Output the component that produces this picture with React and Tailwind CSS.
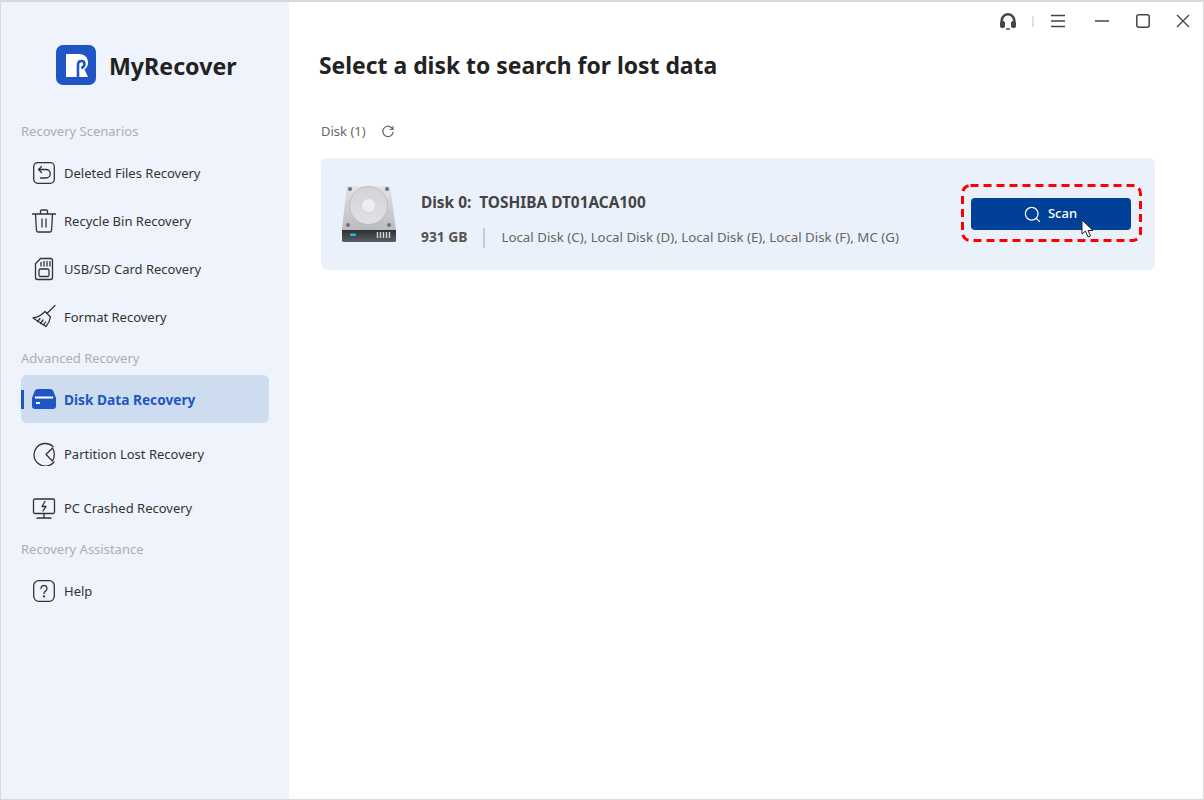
import { Search } from 'lucide-react';

const font = { fontFamily: '"Noto Sans", sans-serif' };

const Logo = () => (
  <svg width="40" height="40" viewBox="0 0 40 40">
    <rect width="40" height="40" rx="7" fill="#1f55c4" />
    <path d="M10 9h13c5.500 0 9 3.500 9 8.500 0 3-1.300 5.500-3.500 7L32 32H10z" fill="#fff" />
    <path d="M22 33V20c0-2.500 1.500-4 3.500-4s3 1.500 3 3c0 2-1.500 3.500-3.500 4.500" fill="none" stroke="#1f55c4" strokeWidth="2.600" />
    <path d="M24 21l3.500 5.500-4 .5z" fill="#fff" />
  </svg>
);

const Ico = ({ children }) => (
  <svg width="24" height="24" viewBox="0 0 24 24" fill="none" stroke="#333" strokeWidth="1.300" strokeLinecap="round" strokeLinejoin="round">
    {children}
  </svg>
);

const icons = {
  deleted: (
    <Ico>
      <rect x="1.700" y="1.700" width="20.600" height="20.600" rx="4" />
      <path d="M9.500 5.500 6.500 8.500l3 3M6.800 8.500h7.200a3.800 3.800 0 0 1 0 8.500H8.500" />
    </Ico>
  ),
  bin: (
    <Ico>
      <path d="M.5 5h23M8.500 5V2.200c0-.7.500-1.200 1.200-1.200h4.600c.7 0 1.200.5 1.200 1.200V5M3.500 5l1 16.500c0 .9.700 1.500 1.500 1.500h12c.8 0 1.500-.6 1.500-1.500l1-16.500M10 10v8M14 10v8" />
    </Ico>
  ),
  sd: (
    <Ico>
      <path d="M8.500 1.500h10c1.200 0 2 .8 2 2v17c0 1.200-.8 2-2 2H5.500c-1.200 0-2-.8-2-2V6.700z" />
      <rect x="7" y="12" width="10" height="7.500" rx="1.500" />
      <path d="M9 5.500v3.500M12 4.500v4.500M15 4.500v4.500M18 4.500v4.500" />
    </Ico>
  ),
  broom: (
    <Ico>
      <path d="M23 .5 15 8.500M13 6.500l5.500 5.500c-.5 3-2 6.500-4.500 9.500L1 13c4.500-.5 8.500-3 12-6.500zM5.500 16.500l2.500-3M8.500 18.500l2.500-3.500M11.500 20l2-3" />
    </Ico>
  ),
  partition: (
    <Ico>
      <path d="M21 4.500a11.300 11.300 0 1 0 1 15.500" />
      <path d="M20.500 6 14 12.500l6.500 6.500c1.200-1.800 1.800-4 1.800-6.500s-.6-4.700-1.800-6.500z" />
    </Ico>
  ),
  pc: (
    <Ico>
      <rect x="1.500" y="3" width="21" height="14.500" rx="1.500" />
      <path d="M13 5.500 10 10.500h4L11 15M12 17.500v4.500M5 22h14" />
    </Ico>
  ),
  help: (
    <Ico>
      <rect x="1.700" y="1.700" width="20.600" height="20.600" rx="5" />
      <path d="M9 9.500a3 3 0 1 1 4.500 2.600c-1 .6-1.500 1.200-1.500 2.400" />
      <circle cx="12" cy="17.500" r=".5" fill="#333" />
    </Ico>
  ),
};

const MenuItem = ({ icon, label, h = 'h-12' }) => (
  <div className={`${h} flex items-center pl-[11px] gap-[8px] text-[13px] text-[#333]`}>
    <span className="w-6 h-6 flex-none">{icons[icon]}</span>
    <span className="pt-0.5">{label}</span>
  </div>
);

const SectionLabel = ({ children, h, className = '' }) => (
  <div className={`${h} ${className} flex items-center text-[13px] text-[#b0adad]`}>{children}</div>
);

const DiskIcon = () => (
  <svg width="56" height="58" viewBox="0 0 56 58">
    <defs>
      <linearGradient id="body" x1="0" y1="0" x2="0" y2="1">
        <stop offset="0" stopColor="#e2e3e5" />
        <stop offset="1" stopColor="#b9bbbe" />
      </linearGradient>
      <linearGradient id="plate" x1="0" y1="0" x2="0" y2="1">
        <stop offset="0" stopColor="#d2d4d7" />
        <stop offset="1" stopColor="#e0e1e3" />
      </linearGradient>
      <linearGradient id="base" x1="0" y1="0" x2="0" y2="1">
        <stop offset="0" stopColor="#2b3035" />
        <stop offset="1" stopColor="#5a5f63" />
      </linearGradient>
    </defs>
    <path d="M8 1h39c1.500 0 2.500 1 2.600 2.500L55 45H1L5.500 3.500C5.600 2 6.500 1 8 1z" fill="url(#body)" />
    <circle cx="27.500" cy="20.500" r="19" fill="url(#plate)" stroke="#aeb0b3" strokeWidth=".6" />
    <circle cx="27.500" cy="20.500" r="7" fill="#eeeeee" stroke="#c4c5c7" strokeWidth=".5" />
    <circle cx="9" cy="4" r="2" fill="#6f7275" />
    <circle cx="46" cy="4" r="2" fill="#6f7275" />
    <circle cx="7" cy="40" r="2" fill="#6f7275" />
    <circle cx="48" cy="40" r="2" fill="#6f7275" />
    <path d="M1 45h54v10.500c0 .8-.7 1.500-1.500 1.500h-51c-.8 0-1.500-.7-1.500-1.500z" fill="url(#base)" />
    <rect x="9" y="48.500" width="6" height="2.500" rx="1" fill="#2fb4ee" />
    <path d="M36.500 47v6M39.500 47v6M42.500 47v6M45.500 47v6M48.500 47v6" stroke="#d6d8da" strokeWidth="1.400" />
  </svg>
);

export default function App() {
  return (
    <div className="w-[1204px] h-[800px] flex bg-white border border-[#d9d9d9] border-t-2 overflow-hidden" style={font}>
      <aside className="w-[288px] flex-none bg-[#eff3fb] px-5 pt-[43px]">
        <div className="flex items-center gap-[13px] pl-[35px] h-10">
          <Logo />
          <span className="pt-0.5 text-[23.200px] font-bold text-[#222]">MyRecover</span>
        </div>
        <div className="mt-[30px]">
          <SectionLabel h="h-[34px]">Recovery Scenarios</SectionLabel>
          <MenuItem icon="deleted" label="Deleted Files Recovery" />
          <MenuItem icon="bin" label="Recycle Bin Recovery" />
          <MenuItem icon="sd" label="USB/SD Card Recovery" />
          <MenuItem icon="broom" label="Format Recovery" />
          <SectionLabel h="h-[34px]" className="pt-0.5">Advanced Recovery</SectionLabel>
          <div className="relative h-12 flex items-center pl-[11px] gap-[8px] rounded-md bg-[#cedcef] text-[13.700px] font-bold text-[#1f55c4]">
            <span className="absolute left-0 top-[15px] w-[3px] h-[19px] bg-[#1f55c4]" />
            <svg width="24" height="20" viewBox="0 0 24 20" className="flex-none">
              <path d="M6 0h12c1.500 0 2.500.7 3.300 2L24 9v8c0 1.700-1.300 3-3 3H3c-1.700 0-3-1.300-3-3V9l2.700-7C3.500.7 4.500 0 6 0z" fill="#1f55c4" />
              <rect x="3" y="7.500" width="18" height="2" fill="#fff" />
              <rect x="4" y="13" width="4" height="2" fill="#fff" />
            </svg>
            <span className="pt-0.5">Disk Data Recovery</span>
          </div>
          <div className="h-[4px]" />
          <MenuItem icon="partition" label="Partition Lost Recovery" h="h-[54px]" />
          <MenuItem icon="pc" label="PC Crashed Recovery" h="h-[54px]" />
          <SectionLabel h="h-8" className="pb-0.5">Recovery Assistance</SectionLabel>
          <MenuItem icon="help" label="Help" />
        </div>
      </aside>

      <main className="flex-1 relative pl-[30px] pr-[48px]">
        <div className="h-[38px] flex items-center justify-end -mr-[36px]">
          <svg width="18" height="18" viewBox="0 0 18 18" fill="none">
            <path d="M2.800 10V8.500a6.200 6.200 0 0 1 12.400 0V10" stroke="#444" strokeWidth="2.600" />
            <rect x="1" y="9" width="5" height="7" rx="2" fill="#444" />
            <rect x="12" y="9" width="5" height="7" rx="2" fill="#444" />
            <path d="M7 17h4" stroke="#444" strokeWidth="1.400" />
          </svg>
          <span className="ml-[15px] w-[2px] h-[11px] bg-[#dfe2e6]" />
          <svg className="ml-[16px]" width="16" height="14" viewBox="0 0 16 14" stroke="#444" strokeWidth="1.300">
            <path d="M1 1.500h14M1 7h14M1 12.500h14" />
          </svg>
          <svg className="ml-[28px]" width="16" height="16" viewBox="0 0 16 16" stroke="#444" strokeWidth="1.500">
            <path d="M1 8h14" />
          </svg>
          <svg className="ml-[25px]" width="16" height="16" viewBox="0 0 16 16" fill="none" stroke="#444" strokeWidth="1.500">
            <rect x="1.800" y="1.800" width="12.400" height="12.400" rx="2" />
          </svg>
          <svg className="ml-[24px]" width="16" height="16" viewBox="0 0 16 16" stroke="#444" strokeWidth="1.300">
            <path d="M2 2l12 12M14 2 2 14" />
          </svg>
        </div>
        <h1 className="mt-[10px] h-8 flex items-center text-[22.900px] font-bold text-[#222]">Select a disk to search for lost data</h1>
        <div className="ml-[2px] mt-[38px] h-6 flex items-center gap-[15px] text-[13px] text-[#666]">
          <span>Disk (1)</span>
          <svg width="14" height="14" viewBox="0 0 14 14" fill="none" stroke="#666" strokeWidth="1.200" strokeLinecap="round">
            <path d="M11.800 4.300A5.200 5.200 0 1 0 12.200 7M12 1.500v3H9" />
          </svg>
        </div>
        <div className="relative ml-[2px] mt-[14px] h-[112px] rounded-md bg-[#ebf1fa] flex items-center pl-[20px] pr-6">
          <DiskIcon />
          <div className="ml-[24px] flex-1 pt-[11px]">
            <div className="text-[15.400px] font-bold text-[#444]">
              Disk 0:<span className="ml-[8px]">TOSHIBA DT01ACA100</span>
            </div>
            <div className="mt-[13px] flex items-center text-[13.300px] text-[#666]">
              <span className="text-[13.800px] font-bold text-[#555]">931 GB</span>
              <span className="mx-[16px] w-[2px] h-5 bg-[#c9c9c9]" />
              <span>Local Disk (C), Local Disk (D), Local Disk (E), Local Disk (F), MC (G)</span>
            </div>
          </div>
          <button className="w-40 h-8 rounded bg-[#004098] text-white text-[13px] font-medium flex items-center justify-center gap-[6px] pr-[2px]">
            <Search size={19} strokeWidth={1.600} />
            Scan
          </button>
          <svg className="absolute left-[640px] top-[26px]" width="181" height="58" viewBox="0 0 181 58" fill="none">
            <rect x="1.500" y="1.500" width="178" height="55" rx="8" stroke="#f00" strokeWidth="3" strokeDasharray="8 5" />
          </svg>
          <svg className="absolute left-[760px] top-[61px]" width="14" height="20" viewBox="0 0 14 20">
            <path d="M1 1v14l3.500-3 2.500 6 2.500-1-2.500-5.500h5z" fill="#fff" stroke="#222" strokeWidth="1" strokeLinejoin="round" />
          </svg>
        </div>
      </main>
    </div>
  );
}
